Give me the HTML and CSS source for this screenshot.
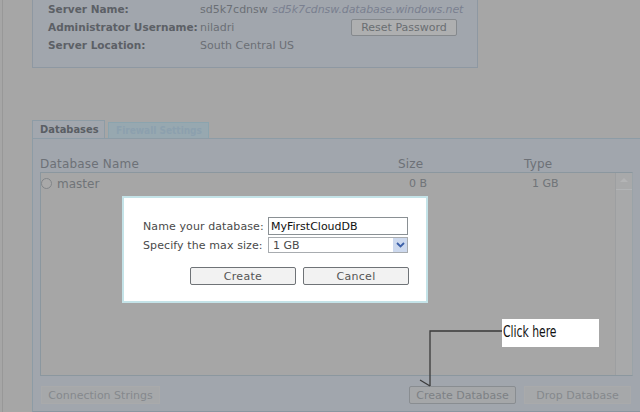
FILE: index.html
```html
<!DOCTYPE html>
<html lang="en">
<head>
    <meta charset="UTF-8">
    <title>Server - Databases</title>
<link rel="stylesheet" href="styles.css">
</head>
<body>
    <div class="frame">
        <div class="server-info">
            <div class="info-row">
                <span class="info-label">Server Name:</span>
                <span class="info-value">sd5k7cdnsw <i>sd5k7cdnsw.database.windows.net</i></span>
            </div>
            <div class="info-row">
                <span class="info-label">Administrator Username:</span>
                <span class="info-value">niladri</span>
                <a class="btn btn-reset">Reset Password</a>
            </div>
            <div class="info-row">
                <span class="info-label">Server Location:</span>
                <span class="info-value">South Central US</span>
            </div>
        </div>

        <div class="tabs">
            <div class="tab active">Databases</div>
            <div class="tab">Firewall Settings</div>
        </div>

        <div class="tab-panel">
            <div class="db-head">
                <span class="col-name">Database Name</span>
                <span class="col-size">Size</span>
                <span class="col-type">Type</span>
            </div>
            <div class="db-list">
                <div class="db-rows">
                    <div class="db-row">
                        <span class="col-name"><span class="radio"></span>master</span>
                        <span class="col-size">0 B</span>
                        <span class="col-type">1 GB</span>
                    </div>
                </div>
                <div class="scrollbar">
                    <div class="scroll-up"></div>
                </div>
            </div>
            <div class="db-actions">
                <a class="btn btn-flat">Connection Strings</a>
                <span class="spacer"></span>
                <a class="btn btn-create">Create Database</a>
                <a class="btn btn-flat btn-drop">Drop Database</a>
            </div>
        </div>
    </div>

    <div class="dialog">
        <div class="dialog-row">
            <label for="dbname">Name your database:</label>
            <input type="text" id="dbname" value="MyFirstCloudDB">
        </div>
        <div class="dialog-row">
            <label for="dbsize">Specify the max size:</label>
            <div class="select">
                <span>1 GB</span>
                <span class="select-arrow">
                    <svg width="9" height="6" viewBox="0 0 9 6"><path d="M1 1 L4.5 4.5 L8 1" fill="none" stroke="#3b5fa8" stroke-width="1.8"/></svg>
                </span>
            </div>
        </div>
        <div class="dialog-buttons">
            <a class="btn btn-dialog">Create</a>
            <a class="btn btn-dialog">Cancel</a>
        </div>
    </div>

    <svg class="pointer" width="120" height="70" viewBox="0 0 120 70">
        <path d="M92 11 H20 V66" fill="none" stroke="#3a3a3a" stroke-width="1.3"/>
        <path d="M20 66 L10 60" fill="none" stroke="#3a3a3a" stroke-width="1.3"/>
    </svg>
    <div class="callout"><span>Click here</span></div>
</body>
</html>
```

FILE: styles.css
```css
body {
    margin: 0;
    width: 640px;
    height: 412px;
    overflow: hidden;
    background-color: #a6a6a6;
    font-family: "DejaVu Sans", Verdana, sans-serif;
    font-size: 11px;
    position: relative;
    white-space: nowrap;
}

.frame {
    margin-left: 2px;
    border-left: 1px solid #989898;
    padding-left: 29px;
    height: 412px;
    box-sizing: border-box;
}

/* server info panel */
.server-info {
    width: 446px;
    height: 68px;
    box-sizing: border-box;
    background-color: #a1a6ad;
    border: 1px solid #8e98a2;
    border-top: none;
    padding: 0 20px 0 15px;
}

.info-row {
    display: flex;
    align-items: center;
    height: 18px;
}

.info-label {
    width: 152px;
    flex-shrink: 0;
    font-weight: bold;
    font-size: 10.5px;
    color: #5c6066;
}

.info-value {
    color: #6b6f75;
    flex-shrink: 0;
}

.info-value i {
    color: #7a8090;
    margin-left: 1px;
    letter-spacing: -0.1px;
}

.btn {
    display: flex;
    align-items: center;
    justify-content: center;
    box-sizing: border-box;
    cursor: pointer;
    color: #74787c;
    flex-shrink: 0;
}

.btn-reset {
    margin-left: auto;
    width: 106px;
    height: 17px;
    border: 1px solid #85898d;
    border-radius: 2px;
    background-color: #aeafb0;
    color: #6a6e72;
}

/* tabs */
.tabs {
    display: flex;
    gap: 3px;
    margin-top: 52px;
    align-items: flex-end;
    height: 18px;
}

.tab {
    height: 18px;
    box-sizing: border-box;
    padding: 0 7px;
    display: flex;
    align-items: center;
    border: 1px solid #8d9ca6;
    border-bottom: none;
    background-color: #a2a7ae;
    color: #5a5e64;
    font-family: "DejaVu Sans Condensed", "DejaVu Sans", sans-serif;
    font-weight: bold;
    width: 73px;
}

.tab:not(.active) {
    height: 16px;
    width: 101px;
    font-size: 10px;
    background-color: #97a8b0;
    color: #8ca0ae;
    border-color: #8ba4ae;
}

.tab-panel {
    width: 640px;
    height: 274px;
    box-sizing: border-box;
    background-color: #a1a6ad;
    border: 1px solid #8d9ca6;
    border-bottom-color: #8a96a0;
    padding: 16px 0 0 7px;
}

.db-head,
.db-row {
    display: flex;
    align-items: center;
}

.db-head {
    height: 17px;
    font-size: 12px;
    color: #6d7177;
    letter-spacing: 0.2px;
}

.col-name {
    width: 358px;
    display: flex;
    align-items: center;
}

.col-size {
    width: 126px;
}

.db-row .col-size {
    width: 123px;
}

.db-row .col-type {
    width: 50px;
}

.db-list {
    width: 593px;
    height: 204px;
    box-sizing: border-box;
    background-color: #a6a6a6;
    border: 1px solid #8b979f;
    border-right-color: #9aa3a8;
    display: flex;
}

.db-rows {
    flex: 1;
    padding-top: 3px;
}

.db-row {
    height: 15px;
    color: #707478;
    font-size: 11px;
}

.db-row .col-name {
    width: 368px;
    font-size: 12px;
}

.radio {
    width: 9px;
    height: 9px;
    border: 1px solid #818589;
    border-radius: 50%;
    margin: 0 5px 0 0;
    background-color: #a9a9a9;
}

.scrollbar {
    width: 16px;
    border-left: 1px solid #9d9fa1;
    background-color: #a8a9aa;
}

.scroll-up {
    height: 16px;
    border-bottom: 1px solid #b2b4b6;
    position: relative;
}

.scroll-up::after {
    content: "";
    position: absolute;
    left: 4px;
    top: 5px;
    border: 4px solid transparent;
    border-bottom: 4px solid #b3b4b5;
    border-top: none;
}

.db-actions {
    display: flex;
    gap: 8px;
    margin-top: 10px;
    padding-left: 1px;
    width: 590px;
}

.spacer {
    flex: 1;
}

.db-actions .btn {
    height: 18px;
}

.btn-flat {
    width: 119px;
    border: 1px solid #a9aaab;
    background-color: #a6a8aa;
    color: #85898d;
}

.btn-create {
    width: 107px;
    border: 1px solid #898d91;
    border-radius: 2px;
    background-color: #a5a7a9;
    color: #7d8185;
}

.btn-drop {
    width: 107px;
}

/* dialog */
.dialog {
    position: absolute;
    left: 122px;
    top: 196px;
    width: 306px;
    height: 107px;
    box-sizing: border-box;
    background-color: white;
    border: 2px solid #c4e3e8;
    padding: 19px 0 0 19px;
    color: #4a4a4a;
}

.dialog-row {
    display: flex;
    align-items: center;
    height: 18px;
    margin-bottom: 1px;
}

.dialog-row label {
    width: 125px;
    letter-spacing: 0.1px;
}

.dialog-row input {
    width: 140px;
    height: 18px;
    box-sizing: border-box;
    border: 1px solid #8a9094;
    padding: 0 2px;
    font-family: "DejaVu Sans", sans-serif;
    font-size: 11px;
    color: #111;
    margin: 0;
    outline: none;
}

.select {
    width: 140px;
    height: 16px;
    box-sizing: border-box;
    border: 1px solid #a8acb0;
    display: flex;
    align-items: center;
    padding-left: 4px;
    font-size: 11px;
}

.select span:first-child {
    flex: 1;
}

.select-arrow {
    width: 14px;
    height: 14px;
    display: flex;
    align-items: center;
    justify-content: center;
    background-color: #cdd9ee;
}

.dialog-buttons {
    display: flex;
    gap: 7px;
    margin-top: 13px;
    padding-left: 47px;
}

.btn-dialog {
    width: 106px;
    height: 18px;
    border: 1px solid #6f7377;
    border-radius: 2px;
    background-color: #f2f2f2;
    color: #555;
    letter-spacing: 0.3px;
}

/* annotation */
.pointer {
    position: absolute;
    left: 410px;
    top: 320px;
}

.callout {
    position: absolute;
    left: 502px;
    top: 319px;
    width: 97px;
    height: 28px;
    background-color: white;
    color: #111;
    font-family: "Liberation Sans Narrow", "DejaVu Sans Condensed", sans-serif;
    font-size: 16px;
    padding: 3px 0 0 1px;
    box-sizing: border-box;
}

.callout span {
    display: inline-block;
    transform: scaleX(0.75);
    transform-origin: left;
}
```
